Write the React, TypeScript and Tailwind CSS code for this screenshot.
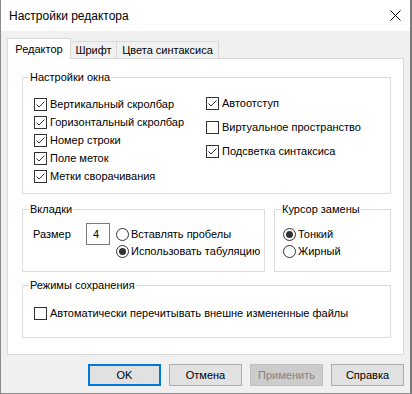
import React from 'react';

const Check = ({ checked }: { checked: boolean }) => (
  <svg width="13" height="13" viewBox="0 0 13 13" className="shrink-0">
    <rect x="0.5" y="0.5" width="12" height="12" fill="#fff" stroke="#333" />
    {checked && <path d="M2.5 6.5 L5 9 L10.5 3.5" fill="none" stroke="#333" strokeWidth="1" />}
  </svg>
);

const Radio = ({ checked }: { checked: boolean }) => (
  <svg width="13" height="13" viewBox="0 0 13 13" className="shrink-0">
    <circle cx="6.5" cy="6.5" r="6" fill="#fff" stroke="#333" />
    {checked && <circle cx="6.5" cy="6.5" r="3.5" fill="#333" />}
  </svg>
);

const CheckRow = ({ label, checked }: { label: string; checked: boolean }) => (
  <div className="flex h-[18px] items-center gap-[3px] whitespace-nowrap">
    <Check checked={checked} />
    <span>{label}</span>
  </div>
);

const RadioRow = ({ label, checked }: { label: string; checked: boolean }) => (
  <div className="flex h-[17px] items-center gap-[2px] whitespace-nowrap">
    <Radio checked={checked} />
    <span>{label}</span>
  </div>
);

const Group = ({ title, className, children }: { title: string; className: string; children: React.ReactNode }) => (
  <div className={`relative border border-[#dcdcdc] ${className}`}>
    <span className="absolute -top-[9px] left-[6px] bg-white px-[1px] leading-[16px]">{title}</span>
    {children}
  </div>
);

const Button = ({ label, primary, disabled }: { label: string; primary?: boolean; disabled?: boolean }) => (
  <button
    className={`flex h-[22px] w-[73px] items-center justify-center ${
      primary
        ? 'border-2 border-[#0078d7] bg-[#e1e1e1] text-black'
        : disabled
        ? 'border border-[#bfbfbf] bg-[#cccccc] text-[#838383]'
        : 'border border-[#adadad] bg-[#e1e1e1] text-black'
    }`}
  >
    {label}
  </button>
);

export default function App() {
  return (
    <div className="flex h-[394px] w-[412px] flex-col border-b border-l border-r-2 border-b-[#8a8a8a] border-l-[#8a8a8a] border-r-[#7a7a7a] bg-[#f0f0f0] font-['Segoe_UI','Liberation_Sans',sans-serif] text-[11px] text-black">
      {/* title bar */}
      <div className="flex h-[31px] shrink-0 items-center justify-between bg-white pl-[8px] pr-[9px] text-[12px]">
        <span>Настройки редактора</span>
        <svg width="11" height="11" viewBox="0 0 11 11">
          <path d="M0.5 0.5 L10.5 10.5 M10.5 0.5 L0.5 10.5" stroke="#000" strokeWidth="1" />
        </svg>
      </div>

      {/* tabs */}
      <div className="ml-[6px] mt-[7px] flex h-[20px] items-end">
        <div className="relative z-10 -mb-px flex h-[21px] w-[64px] items-center justify-center border border-b-0 border-[#d9d9d9] bg-white">
          Редактор
        </div>
        <div className="flex h-[17px] w-[46px] items-center justify-center border-r border-t border-[#d9d9d9]">Шрифт</div>
        <div className="flex h-[17px] w-[102px] items-center justify-center border-r border-t border-[#d9d9d9]">
          Цвета синтаксиса
        </div>
      </div>

      {/* panel */}
      <div className="ml-[6px] flex h-[297px] w-[397px] flex-col border border-[#d9d9d9] bg-white pl-[14px] pt-[18px]">
        <Group title="Настройки окна" className="h-[117px] w-[369px]">
          <div className="flex pl-[11px] pt-[17px]">
            <div className="flex w-[172px] flex-col">
              <CheckRow label="Вертикальный скролбар" checked />
              <CheckRow label="Горизонтальный скролбар" checked />
              <CheckRow label="Номер строки" checked />
              <CheckRow label="Поле меток" checked />
              <CheckRow label="Метки сворачивания" checked />
            </div>
            <div className="-mt-[1px] flex flex-col gap-[6px]">
              <CheckRow label="Автоотступ" checked />
              <CheckRow label="Виртуальное пространство" checked={false} />
              <CheckRow label="Подсветка синтаксиса" checked />
            </div>
          </div>
        </Group>

        <div className="mt-[15px] flex gap-[9px]">
          <Group title="Вкладки" className="h-[63px] w-[243px]">
            <div className="flex pl-[10px] pt-[13px]">
              <span className="flex h-[22px] w-[53px] items-center">Размер</span>
              <div className="flex h-[22px] w-[24px] items-center border border-[#7a7a7a] pl-[6px]">4</div>
              <div className="ml-[6px] mt-[3px] flex w-[144px] flex-col overflow-hidden">
                <RadioRow label="Вставлять пробелы" checked={false} />
                <RadioRow label="Использовать табуляцию" checked />
              </div>
            </div>
          </Group>
          <Group title="Курсор замены" className="h-[63px] w-[117px]">
            <div className="flex flex-col pl-[8px] pt-[16px]">
              <RadioRow label="Тонкий" checked />
              <RadioRow label="Жирный" checked={false} />
            </div>
          </Group>
        </div>

        <Group title="Режимы сохранения" className="mt-[13px] h-[53px] w-[369px]">
          <div className="pl-[11px] pt-[18px]">
            <CheckRow label="Автоматически перечитывать внешне измененные файлы" checked={false} />
          </div>
        </Group>
      </div>

      {/* buttons */}
      <div className="ml-[87px] mt-[9px] flex gap-[8px]">
        <Button label="OK" primary />
        <Button label="Отмена" />
        <Button label="Применить" disabled />
        <Button label="Справка" />
      </div>
    </div>
  );
}
